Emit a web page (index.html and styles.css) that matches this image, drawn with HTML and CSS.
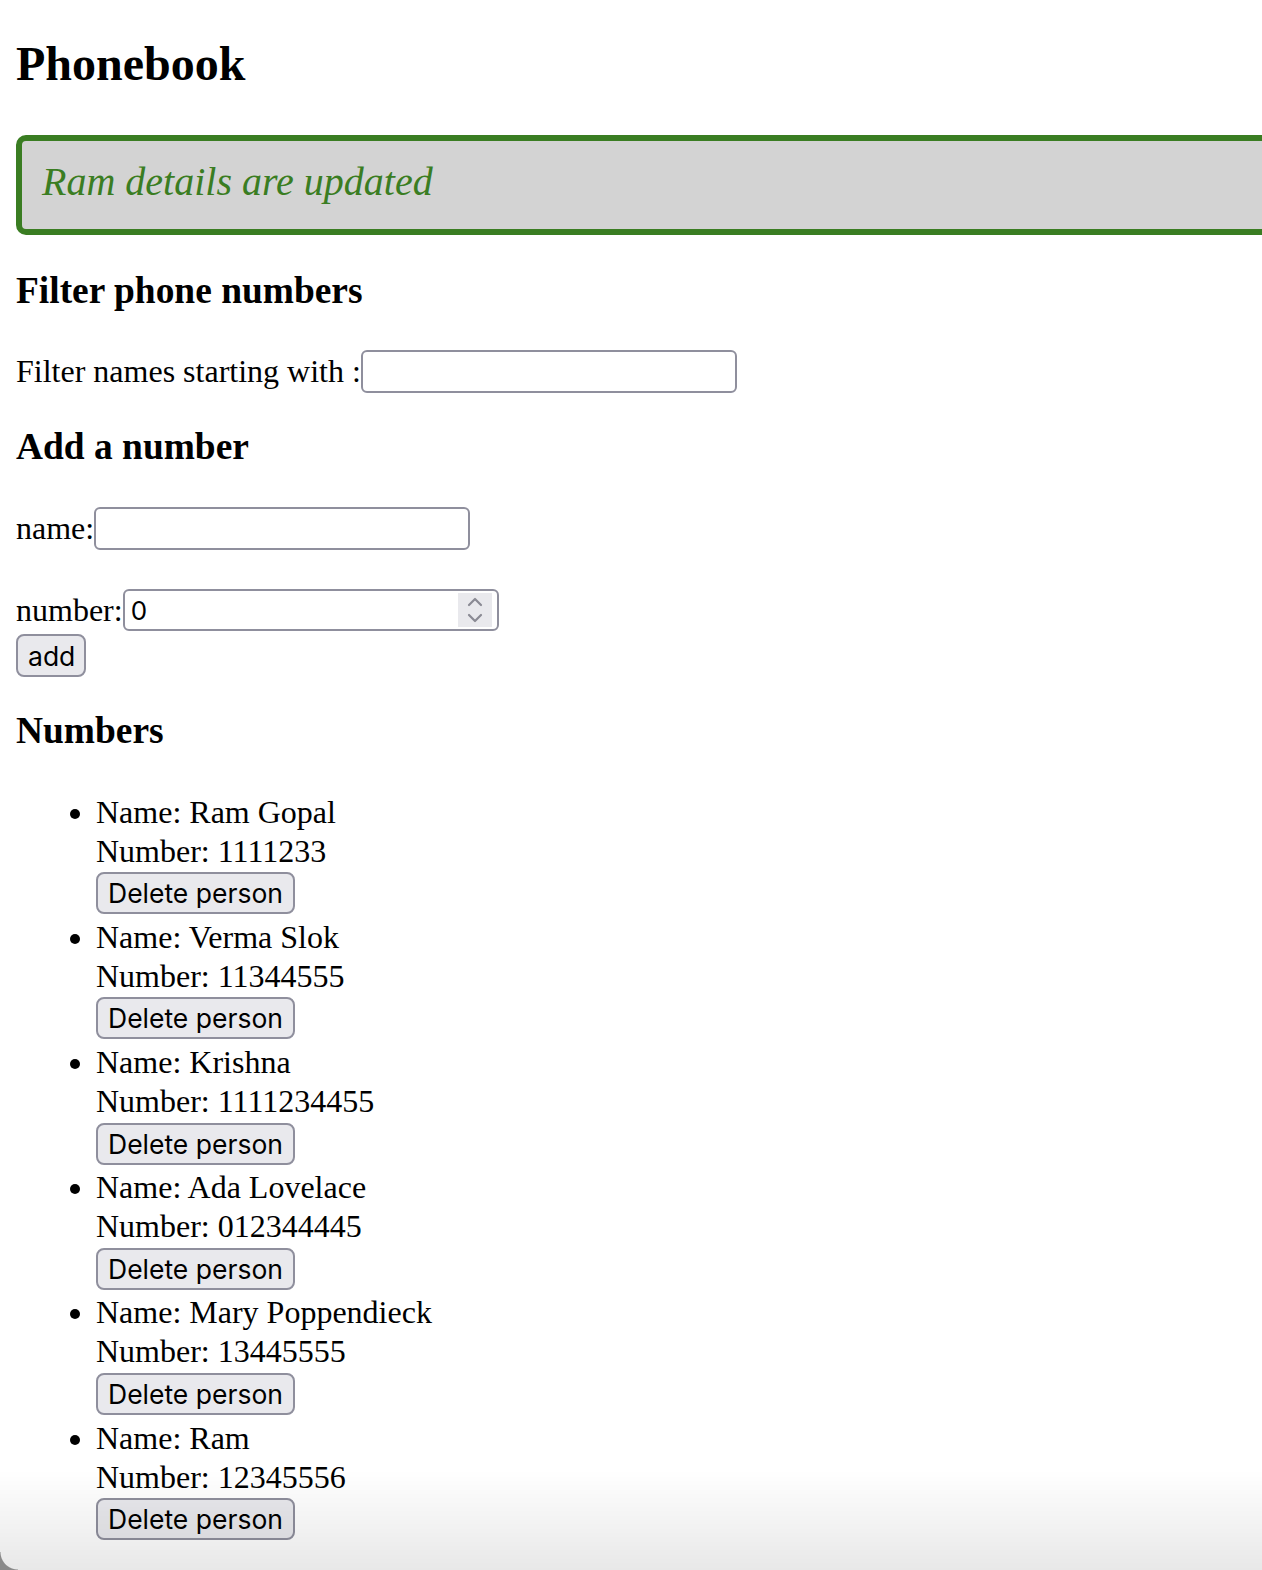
FILE: index.html
```html
<!DOCTYPE html>
<html lang="en">
<head>
<meta charset="utf-8">
<title>Phonebook</title>
<link rel="stylesheet" href="styles.css">
</head>
<body>
<div class="app">
  <h2 class="title">Phonebook</h2>
  <div class="notice">Ram details are updated</div>

  <h3 class="section section-first">Filter phone numbers</h3>
  <div class="row row-filter">Filter names starting with :<input class="field" type="text"></div>

  <h3 class="section">Add a number</h3>
  <form class="add-form">
    <div class="row row-name">name:<input class="field" type="text"></div>
    <div class="row row-number">number:<span class="num-wrap"><input class="field field-num" type="text" value="0"><span class="spinner"><svg width="20" height="30" viewBox="0 0 20 30"><path d="M4 10 L10 4 L16 10" fill="none" stroke="#8a8a94" stroke-width="2.2" stroke-linecap="round" stroke-linejoin="round"/><path d="M4 20 L10 26 L16 20" fill="none" stroke="#8a8a94" stroke-width="2.2" stroke-linecap="round" stroke-linejoin="round"/></svg></span></span></div>
    <div class="row-btn"><button class="btn" type="button">add</button></div>
  </form>

  <h3 class="section section-last">Numbers</h3>
  <ul class="people">
    <li class="person"><div class="line">Name: Ram Gopal</div><div class="line">Number: 1111233</div><button class="btn btn-del" type="button">Delete person</button></li>
    <li class="person"><div class="line">Name: Verma Slok</div><div class="line">Number: 11344555</div><button class="btn btn-del" type="button">Delete person</button></li>
    <li class="person"><div class="line">Name: Krishna</div><div class="line">Number: 1111234455</div><button class="btn btn-del" type="button">Delete person</button></li>
    <li class="person"><div class="line">Name: Ada Lovelace</div><div class="line">Number: 012344445</div><button class="btn btn-del" type="button">Delete person</button></li>
    <li class="person"><div class="line">Name: Mary Poppendieck</div><div class="line">Number: 13445555</div><button class="btn btn-del" type="button">Delete person</button></li>
    <li class="person"><div class="line">Name: Ram</div><div class="line">Number: 12345556</div><button class="btn btn-del" type="button">Delete person</button></li>
  </ul>
</div>
<div class="window-shade"></div>
<div class="window-corner"></div>
</body>
</html>
```
FILE: styles.css
```css
html {
  overflow: hidden;
  background: #fff;
}
body {
  margin: 0;
  padding: 0 16px;
  font-family: "Liberation Serif", "Times New Roman", serif;
  font-size: 32px;
  line-height: 39px;
  color: #000;
}
.app {
  padding-top: 36px;
}
.title {
  font-size: 48px;
  line-height: 56px;
  font-weight: bold;
  margin: 0 0 43px 0;
}
.notice {
  color: #3a7d22;
  background: #d3d3d3;
  font-size: 40px;
  line-height: 48px;
  font-style: italic;
  border: 6px solid #3a7d22;
  border-radius: 10px;
  padding: 17px 20px 23px 20px;
  margin-right: -60px;
}
.section {
  font-size: 37.44px;
  line-height: 44px;
  font-weight: bold;
  margin: 32px 0 38.7px 0;
}
.section-first {
  margin-top: 34px;
  margin-bottom: 36.7px;
}
.row {
  display: flex;
  align-items: center;
  height: 43px;
}
.field {
  box-sizing: border-box;
  width: 376px;
  height: 43px;
  border: 2px solid #8f8f9d;
  border-radius: 6px;
  background: #fff;
  padding: 2px 6px;
  font-family: "Inter", "Liberation Sans", sans-serif;
  font-size: 26px;
  color: #000;
  margin: 0;
  outline: none;
}
.add-form {
  margin: 0;
}
.row-name {
  margin-top: 0;
}
.row-number {
  margin-top: 39px;
  height: 42px;
}
.row-number .field {
  height: 42px;
}
.num-wrap {
  position: relative;
  display: inline-block;
  height: 42px;
}
.spinner {
  position: absolute;
  top: 4px;
  right: 7px;
  width: 34px;
  height: 34px;
  background: #e9e9ed;
  display: flex;
  align-items: center;
  justify-content: center;
}
.row-btn {
  margin-top: 3px;
  height: 43px;
}
.btn {
  box-sizing: border-box;
  font-family: "Inter", "Liberation Sans", sans-serif;
  font-size: 26.5px;
  color: #000;
  background: #e9e9ed;
  border: 2px solid #8f8f9d;
  border-radius: 8px;
  height: 43px;
  padding: 0 10px;
  margin: 0;
}
.row-btn .btn {
  width: 70px;
}
.section-last {
  margin-top: 31.3px;
  margin-bottom: 40px;
}
.people {
  margin: 0;
  padding-left: 80px;
}
.person {
  padding-bottom: 3.7px;
}
.btn-del {
  display: block;
  width: 199px;
  height: 42px;
  margin-top: 1.5px;
  padding: 0;
}
.window-shade {
  position: fixed;
  left: 0;
  right: 0;
  bottom: 0;
  height: 100px;
  background: linear-gradient(rgba(0, 0, 0, 0), rgba(0, 0, 0, 0.09));
  pointer-events: none;
}
.window-corner {
  position: fixed;
  left: 0;
  bottom: 0;
  width: 18px;
  height: 18px;
  background: radial-gradient(circle at 100% 0, rgba(0, 0, 0, 0) 17px, #8a8a8a 18px);
  pointer-events: none;
}
```
